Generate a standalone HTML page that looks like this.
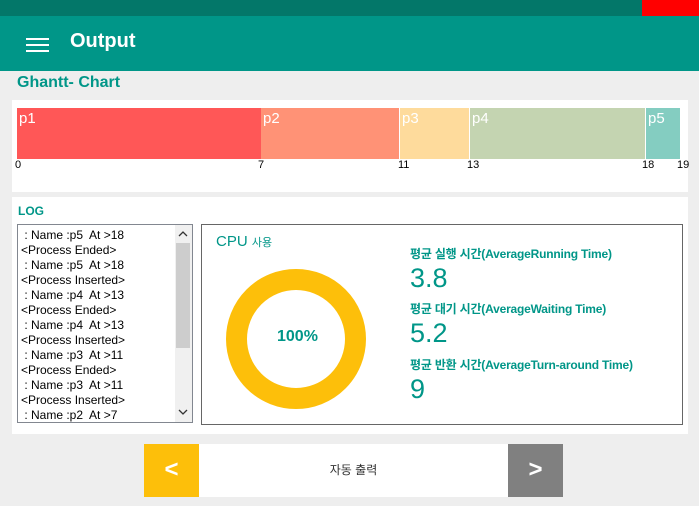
<!DOCTYPE html>
<html><head><meta charset="utf-8"><style>
*{margin:0;padding:0;box-sizing:border-box}
body{width:699px;height:506px;background:#eeeeee;position:relative;overflow:hidden;font-family:"Liberation Sans","Noto Sans CJK KR",sans-serif}
.a{position:absolute}
.teal{color:#009688}
.bar{position:absolute;top:108px;height:51px;color:#fff;font-size:15px;padding:2px 2px}
.tick{position:absolute;top:159px;font-size:11px;color:#000}
.log div{height:15px;line-height:15px;font-size:12px;color:#000;white-space:nowrap}
</style></head><body>
<div class="a" style="left:0;top:0;width:699px;height:16px;background:#037769"></div>
<div class="a" style="left:642px;top:0;width:57px;height:16px;background:#ff0000"></div>
<div class="a" style="left:0;top:16px;width:699px;height:55px;background:#009688"></div>
<div class="a" style="left:26px;top:38px;width:23px;height:2px;background:#fff"></div>
<div class="a" style="left:26px;top:44px;width:23px;height:2px;background:#fff"></div>
<div class="a" style="left:26px;top:50px;width:23px;height:2px;background:#fff"></div>
<div class="a" style="left:70px;top:30px;color:#fff;font-size:20px;font-weight:bold">Output</div>
<div class="a teal" style="left:17px;top:74px;font-size:16px;font-weight:bold">Ghantt- Chart</div>
<div class="a" style="left:12px;top:100px;width:676px;height:92px;background:#fff"></div>
<div class="bar" style="left:17px;width:244px;background:#ff5757">p1</div>
<div class="bar" style="left:261px;width:138px;background:#ff9276">p2</div>
<div class="bar" style="left:400px;width:69px;background:#fedb9c">p3</div>
<div class="bar" style="left:470px;width:175px;background:#c4d4b1">p4</div>
<div class="bar" style="left:646px;width:34px;background:#84cdc1">p5</div>
<div class="tick" style="left:15px">0</div>
<div class="tick" style="left:258px">7</div>
<div class="tick" style="left:398px">11</div>
<div class="tick" style="left:467px">13</div>
<div class="tick" style="left:642px">18</div>
<div class="tick" style="left:677px">19</div>
<div class="a" style="left:12px;top:197px;width:676px;height:237px;background:#fff"></div>
<div class="a teal" style="left:18px;top:204px;font-size:12px;font-weight:bold">LOG</div>
<div class="a log" style="left:17px;top:224px;width:176px;height:199px;border:1px solid #828790;padding:3px 0 0 3px;overflow:hidden">
<div>&nbsp;: Name :p5&nbsp; At &gt;18</div><div>&lt;Process Ended&gt;</div><div>&nbsp;: Name :p5&nbsp; At &gt;18</div><div>&lt;Process Inserted&gt;</div><div>&nbsp;: Name :p4&nbsp; At &gt;13</div><div>&lt;Process Ended&gt;</div><div>&nbsp;: Name :p4&nbsp; At &gt;13</div><div>&lt;Process Inserted&gt;</div><div>&nbsp;: Name :p3&nbsp; At &gt;11</div><div>&lt;Process Ended&gt;</div><div>&nbsp;: Name :p3&nbsp; At &gt;11</div><div>&lt;Process Inserted&gt;</div><div>&nbsp;: Name :p2&nbsp; At &gt;7</div>
</div>
<div class="a" style="left:175px;top:225px;width:17px;height:197px;background:#f0f0f0"></div>
<div class="a" style="left:176px;top:243px;width:14px;height:105px;background:#cdcdcd"></div>
<svg class="a" style="left:177px;top:230px" width="12" height="8"><path d="M2 6 L6 2 L10 6" fill="none" stroke="#333" stroke-width="1.3"/></svg>
<svg class="a" style="left:177px;top:408px" width="12" height="8"><path d="M2 2 L6 6 L10 2" fill="none" stroke="#333" stroke-width="1.3"/></svg>
<div class="a" style="left:201px;top:224px;width:482px;height:201px;border:1px solid #666"></div>
<div class="a teal" style="left:216px;top:233px;font-size:15px">CPU <span style="font-size:11px">사용</span></div>
<svg class="a" style="left:226px;top:269px" width="140" height="140"><circle cx="70" cy="70" r="59.5" fill="none" stroke="#fdbf0a" stroke-width="21"/></svg>
<div class="a teal" style="left:277px;top:328px;font-size:16px;font-weight:bold">100%</div>
<div class="a teal" style="left:410px;top:245px;font-size:12px;font-weight:bold;letter-spacing:-0.2px">평균 실행 시간(AverageRunning Time)</div>
<div class="a teal" style="left:410px;top:263px;font-size:27px">3.8</div>
<div class="a teal" style="left:410px;top:300px;font-size:12px;font-weight:bold;letter-spacing:-0.2px">평균 대기 시간(AverageWaiting Time)</div>
<div class="a teal" style="left:410px;top:318px;font-size:27px">5.2</div>
<div class="a teal" style="left:410px;top:356px;font-size:12px;font-weight:bold;letter-spacing:-0.2px">평균 반환 시간(AverageTurn-around Time)</div>
<div class="a teal" style="left:410px;top:374px;font-size:27px">9</div>
<div class="a" style="left:144px;top:444px;width:55px;height:53px;background:#fdbf0a;color:#fff;font-size:24px;font-weight:bold;text-align:center;line-height:52px">&lt;</div>
<div class="a" style="left:199px;top:444px;width:309px;height:53px;background:#fff;color:#333;font-size:12px;text-align:center;line-height:53px">자동 출력</div>
<div class="a" style="left:508px;top:444px;width:55px;height:53px;background:#808080;color:#fff;font-size:24px;font-weight:bold;text-align:center;line-height:52px">&gt;</div>
</body></html>
